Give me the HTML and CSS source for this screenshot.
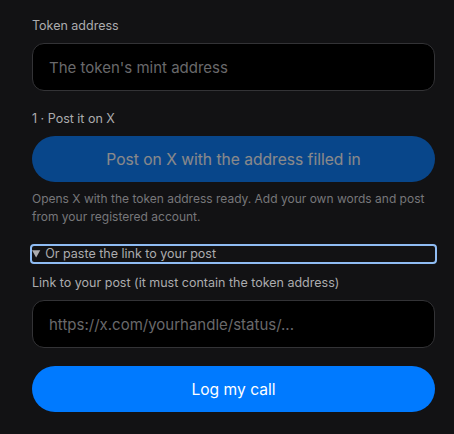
FILE: index.html
```html
<!DOCTYPE html>
<html lang="en">
<head>
<meta charset="utf-8">
<title>Log a call</title>
<link rel="stylesheet" href="styles.css">
</head>
<body>
<form class="form">
  <label class="label" for="mint">Token address</label>
  <input class="field" id="mint" type="text" placeholder="The token's mint address">

  <div class="label step">1 · Post it on X</div>
  <button class="btn btn-disabled" type="button">Post on X with the address filled in</button>
  <p class="help">Opens X with the token address ready. Add your own words and post from your registered account.</p>

  <details class="paste" open>
    <summary class="summary">Or paste the link to your post</summary>
    <label class="label" for="link">Link to your post (it must contain the token address)</label>
    <input class="field" id="link" type="text" placeholder="https://x.com/yourhandle/status/...">
  </details>

  <button class="btn btn-primary" type="button">Log my call</button>
</form>
</body>
</html>
```

FILE: styles.css
```css
html, body {
  margin: 0;
  padding: 0;
  background: #121214;
}

body {
  font-family: Inter, "Noto Sans", "Liberation Sans", sans-serif;
  color: #a8a8aa;
}

.form {
  display: flex;
  flex-direction: column;
  padding: 16px 19px 0 32px;
}

.label {
  display: block;
  font-size: 12.5px;
  line-height: 18px;
  padding-top: 1px;
  color: #acacae;
  margin-bottom: 8px;
}

.step {
  margin-top: 18px;
}

.field {
  box-sizing: border-box;
  width: 100%;
  height: 48px;
  margin: 0;
  padding: 0 16px;
  background: #000;
  border: 1px solid #333336;
  border-radius: 12px;
  font-family: inherit;
  font-size: 15px;
  color: #e6e6e6;
  outline: none;
}

.field::placeholder {
  color: #69696b;
}

.btn {
  box-sizing: border-box;
  width: 100%;
  height: 46px;
  margin: 0;
  border: 0;
  border-radius: 23px;
  font-family: inherit;
  font-size: 15.6px;
  color: #fff;
  background: #007aff;
}

.btn-disabled {
  opacity: 0.5;
}

.help {
  margin: 8px 0 0;
  font-size: 12px;
  line-height: 18px;
  color: #77777a;
}

.paste {
  margin-top: 20px;
}

.summary {
  font-size: 12.5px;
  line-height: 16px;
  color: #acacae;
  outline: 2px solid #8fbcf3;
  border-radius: 2px;
  cursor: pointer;
  margin-bottom: 11px;
}

.btn-primary {
  margin-top: 18px;
}
```
